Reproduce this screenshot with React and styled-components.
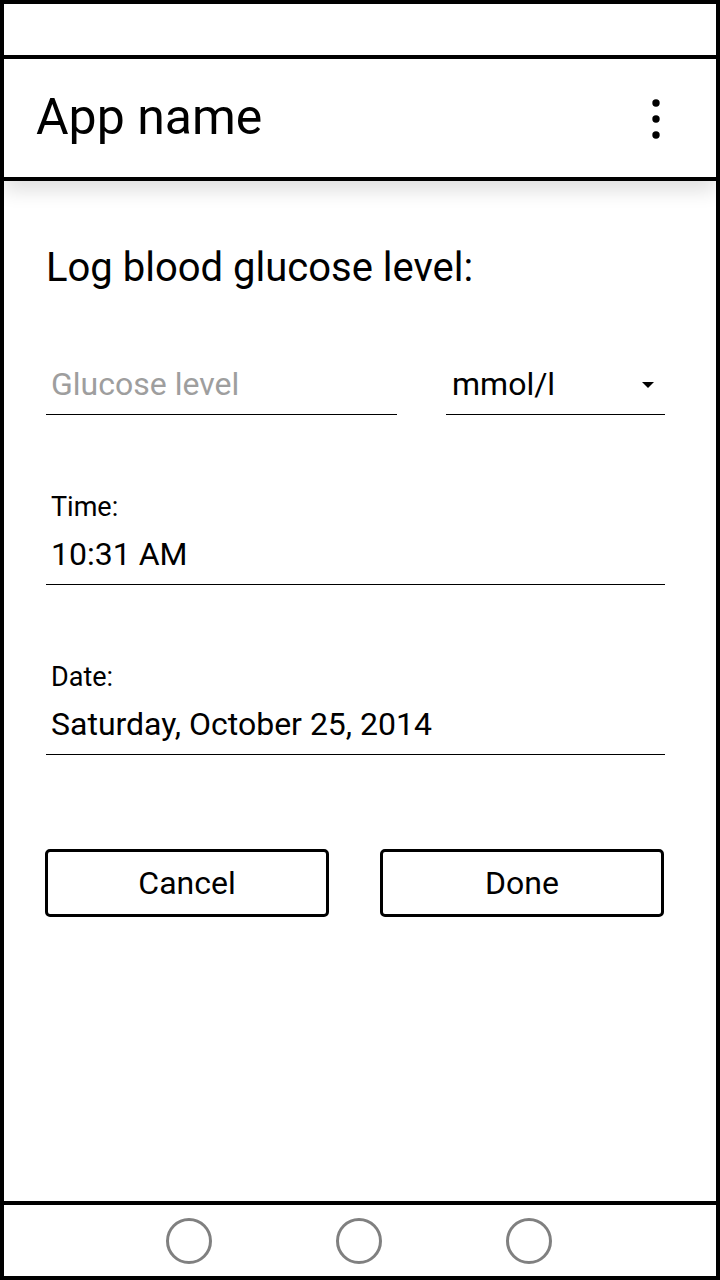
import React from "react";
import styled, { createGlobalStyle } from "styled-components";

const GlobalStyle = createGlobalStyle`
  html, body { margin: 0; padding: 0; background: #fff; }
  body { font-family: Roboto, "Noto Sans", "Liberation Sans", sans-serif; color: #000; }
  * { box-sizing: border-box; }
`;

const Frame = styled.div`
  width: 720px;
  height: 1280px;
  border: 4px solid #000;
  display: flex;
  flex-direction: column;
  background: #fff;
  overflow: hidden;
`;

const StatusBar = styled.div`
  height: 55px;
  border-bottom: 4px solid #000;
  flex: none;
`;

const AppBar = styled.header`
  position: relative;
  z-index: 1;
  height: 122px;
  flex: none;
  border-bottom: 4px solid #000;
  display: flex;
  align-items: center;
  justify-content: space-between;
  padding: 0 56px 0 32px;
  box-shadow: 0 10px 18px rgba(0, 0, 0, 0.12);
  background: #fff;
`;

const Title = styled.h1`
  margin: 0 0 2px;
  font-size: 50px;
  font-weight: 400;
  line-height: 1;
  letter-spacing: 0;
`;

const MenuButton = styled.div`
  width: 8px;
  height: 40px;
  display: flex;
  align-items: center;
  justify-content: center;
  margin-top: 2px;
`;

const Content = styled.main`
  flex: 1;
  padding: 67px 51px 0 42px;
  display: flex;
  flex-direction: column;
`;

const Heading = styled.h2`
  margin: 0 0 80px;
  font-size: 40px;
  font-weight: 400;
  line-height: 1;
`;

const Row = styled.div`
  display: flex;
  gap: 49px;
`;

const Field = styled.div`
  flex: ${(p) => (p.$width ? "none" : "1")};
  width: ${(p) => (p.$width ? `${p.$width}px` : "auto")};
  border-bottom: 1px solid #000;
  padding: 0 ${(p) => (p.$select ? "11px" : "0")} 14px ${(p) => (p.$select ? "6px" : "5px")};
  display: flex;
  align-items: center;
  justify-content: space-between;
  font-size: 32px;
  line-height: 1;
  color: ${(p) => (p.$placeholder ? "#9e9e9e" : "#000")};
`;

const Group = styled.div`
  margin-top: 79px;
  display: flex;
  flex-direction: column;
`;

const Label = styled.div`
  font-size: 27px;
  line-height: 1;
  padding-left: 5px;
  margin-bottom: 17px;
`;

const Arrow = styled.span`
  width: 0;
  height: 0;
  border-left: 6px solid transparent;
  border-right: 6px solid transparent;
  border-top: 6px solid #000;
  margin-top: 2px;
`;

const Buttons = styled.div`
  margin-top: 94px;
  display: flex;
  gap: 51px;
  margin-left: -1px;
`;

const Button = styled.button`
  width: 284px;
  height: 68px;
  border: 3px solid #000;
  border-radius: 5px;
  background: #fff;
  font-family: inherit;
  font-size: 32px;
  line-height: 1;
  color: #000;
  padding: 0;
  cursor: pointer;
`;

const NavBar = styled.nav`
  height: 75px;
  flex: none;
  border-top: 4px solid #000;
  display: flex;
  align-items: center;
  justify-content: center;
  gap: 124px;
  padding-right: 2px;
`;

const NavCircle = styled.span`
  width: 46px;
  height: 46px;
  border-radius: 50%;
  border: 3px solid #808080;
`;

export default function App() {
  return (
    <>
      <GlobalStyle />
      <Frame>
        <StatusBar />
        <AppBar>
          <Title>App name</Title>
          <MenuButton>
            <svg width="8" height="40" viewBox="0 0 8 40">
              <circle cx="4" cy="4" r="3.7" fill="#000" />
              <circle cx="4" cy="20" r="3.7" fill="#000" />
              <circle cx="4" cy="36" r="3.7" fill="#000" />
            </svg>
          </MenuButton>
        </AppBar>
        <Content>
          <Heading>Log blood glucose level:</Heading>
          <Row>
            <Field $width={351} $placeholder>Glucose level</Field>
            <Field $width={219} $select>
              <span>mmol/l</span>
              <Arrow />
            </Field>
          </Row>
          <Group>
            <Label>Time:</Label>
            <Field>10:31 AM</Field>
          </Group>
          <Group>
            <Label>Date:</Label>
            <Field>Saturday, October 25, 2014</Field>
          </Group>
          <Buttons>
            <Button>Cancel</Button>
            <Button>Done</Button>
          </Buttons>
        </Content>
        <NavBar>
          <NavCircle />
          <NavCircle />
          <NavCircle />
        </NavBar>
      </Frame>
    </>
  );
}
